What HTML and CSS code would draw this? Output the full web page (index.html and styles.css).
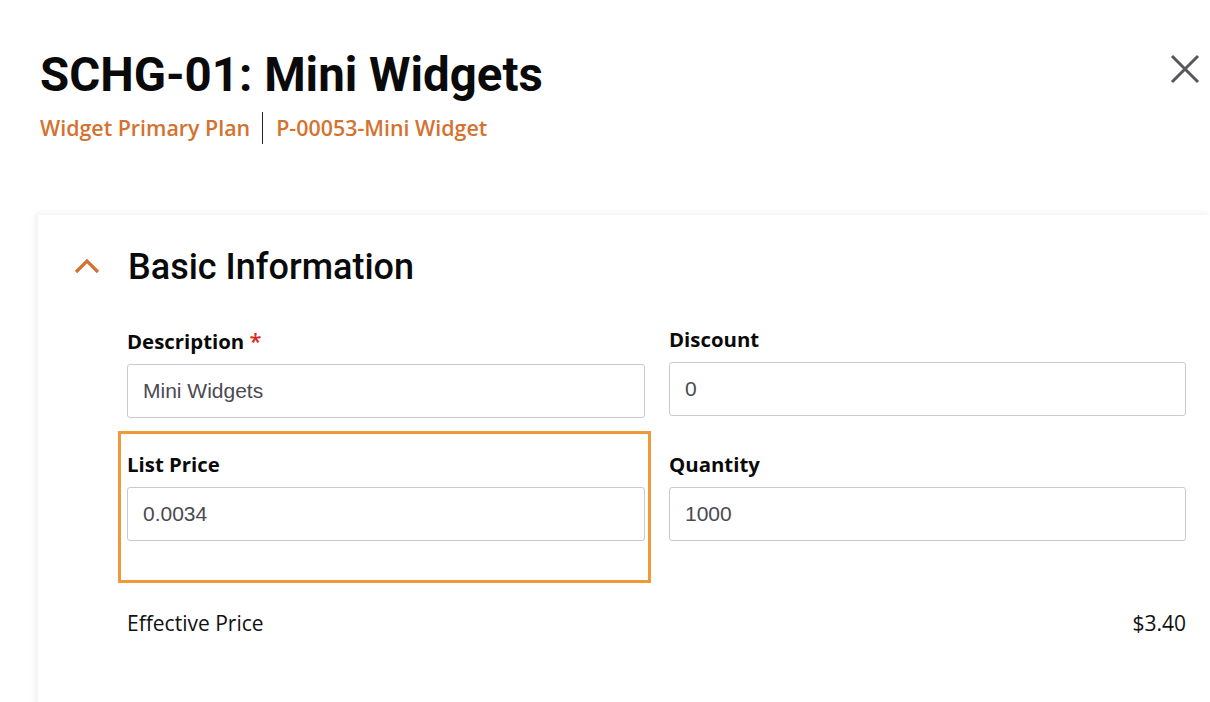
FILE: index.html
```html
<!DOCTYPE html>
<html lang="en">
<head>
<meta charset="utf-8">
<title>SCHG-01: Mini Widgets</title>
<link rel="stylesheet" href="styles.css">
</head>
<body>
<div class="page">
  <header class="header">
    <div class="titles">
      <h1 class="title">SCHG-01: Mini Widgets</h1>
      <div class="crumbs">
        <a class="crumb" href="#">Widget Primary Plan</a>
        <span class="sep"></span>
        <a class="crumb" href="#">P-00053-Mini Widget</a>
      </div>
    </div>
    <button class="close" aria-label="Close">
      <svg width="30" height="30" viewBox="0 0 30 30"><path d="M2 2 L28 28 M28 2 L2 28" stroke="#56565b" stroke-width="3" fill="none"/></svg>
    </button>
  </header>

  <section class="card">
    <div class="card-head">
      <svg class="chev" width="26" height="16" viewBox="0 0 26 16"><path d="M2 14 L13 3 L24 14" stroke="#d4722f" stroke-width="3.2" fill="none"/></svg>
      <h2 class="card-title">Basic Information</h2>
    </div>
    <div class="grid">
      <div class="field">
        <label class="label">Description <span class="req">*</span></label>
        <div class="input">Mini Widgets</div>
      </div>
      <div class="field">
        <label class="label">Discount</label>
        <div class="input">0</div>
      </div>
      <div class="field field-hl">
        <label class="label">List Price</label>
        <div class="input">0.0034</div>
      </div>
      <div class="field">
        <label class="label">Quantity</label>
        <div class="input">1000</div>
      </div>
    </div>
    <div class="effective">
      <span>Effective Price</span>
      <span>$3.40</span>
    </div>
  </section>
</div>
</body>
</html>
```

FILE: styles.css
```css
html, body {
  margin: 0;
  padding: 0;
  background: #ffffff;
}
body {
  font-family: "Open Sans", "Liberation Sans", Arial, sans-serif;
  color: #111;
  overflow: hidden;
}
.page {
  padding: 44px 0 0 40px;
}
.header {
  display: flex;
  justify-content: space-between;
  align-items: flex-start;
  padding-right: 10px;
}
.title {
  margin: 0;
  font-family: Roboto, "Liberation Sans", sans-serif;
  font-weight: 700;
  font-size: 47.4px;
  line-height: 62px;
  color: #0a0a0a;
  letter-spacing: 0;
}
.crumbs {
  display: flex;
  align-items: center;
  margin-top: 6px;
}
.crumb {
  font-family: "Open Sans", sans-serif;
  font-weight: 600;
  font-size: 21.4px;
  line-height: 30px;
  color: #d4722f;
  text-decoration: none;
}
.sep {
  width: 1px;
  height: 32px;
  background: #222;
  margin: 0 13px 0 12px;
}
.close {
  margin-top: 10px;
  background: none;
  border: 0;
  padding: 0;
  width: 30px;
  height: 30px;
  cursor: pointer;
}
.close svg { display: block; }

.card {
  margin-top: 71px;
  margin-left: -2px;
  padding: 30px 24px 40px 36px;
  background: #fff;
  box-shadow: -3px -2px 6px rgba(0,0,0,0.06);
  min-height: 500px;
}
.card-head {
  display: flex;
  align-items: center;
  gap: 28px;
}
.chev { display: block; margin-top: -2px; }
.card-title {
  margin: 0;
  font-family: Roboto, "Liberation Sans", sans-serif;
  font-weight: 500;
  font-size: 36px;
  line-height: 44px;
  color: #0a0a0a;
}
.grid {
  margin-left: 53px;
  margin-top: 38px;
  display: grid;
  grid-template-columns: 518px 517px;
  column-gap: 24px;
  row-gap: 34px;
  align-items: start;
}
.field {
  display: flex;
  flex-direction: column;
  position: relative;
}
.label {
  font-family: "Open Sans", sans-serif;
  font-weight: 700;
  font-size: 20.4px;
  line-height: 24px;
  margin-bottom: 11px;
  color: #0a0a0a;
}
.req {
  color: #d62d20;
  font-size: 22px;
  line-height: 26px;
  font-weight: 600;
}
.input {
  box-sizing: border-box;
  height: 54px;
  border: 1px solid #c9c9d1;
  border-radius: 3px;
  padding: 0 15px;
  display: flex;
  align-items: center;
  font-family: "Liberation Sans", Arial, sans-serif;
  font-size: 21px;
  color: #4a4a52;
}
.field-hl::after {
  content: "";
  position: absolute;
  left: -9px;
  right: -6px;
  top: -21px;
  bottom: -42px;
  border: 3px solid #f0983a;
  pointer-events: none;
}
.effective {
  margin-left: 53px;
  width: 1059px;
  margin-top: 68px;
  display: flex;
  justify-content: space-between;
  font-family: "Open Sans", sans-serif;
  font-size: 21px;
  line-height: 28px;
  color: #111;
}
```
